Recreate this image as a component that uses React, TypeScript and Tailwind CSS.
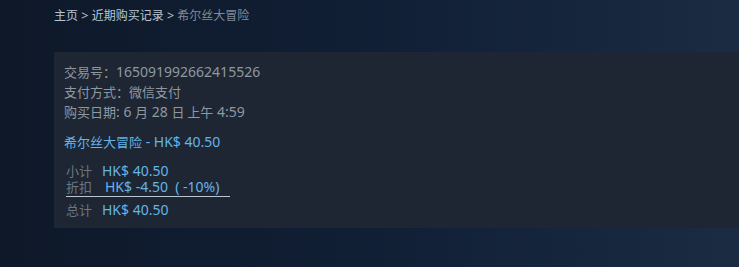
import React from "react";

const latin = { fontFamily: '"Noto Sans", "Noto Sans CJK SC", Arial, sans-serif' };

function C({ children, size = "text-[13px]" }: { children: React.ReactNode; size?: string }) {
  return <span className={size} style={{ fontFamily: '"Noto Sans CJK SC", "Noto Sans", sans-serif' }}>{children}</span>;
}

export default function App() {
  return (
    <div
      className="w-full h-[267px] overflow-hidden bg-[linear-gradient(90deg,#0e1829_0%,#112036_55%,#1a2b42_100%)]"
      style={latin}
    >
      <div className="pl-[54px] pt-[7px]">
        <div className="h-[16px] leading-[16px] text-[12.5px] text-[#b8c6d3] whitespace-nowrap">
          <C size="text-[12px]">主页</C> &gt; <C size="text-[12px]">近期购买记录</C> &gt;{" "}
          <span className="text-[#7f8c99]"><C size="text-[12px]">希尔丝大冒险</C></span>
        </div>
        <div className="mt-[29px] h-[176px] bg-[#1e2633] pl-[10px] pt-[10px]">
          <div className="text-[14px] leading-[20px] text-[#8f98a0]">
            <div><C>交易号：</C>165091992662415526</div>
            <div><C>支付方式：微信支付</C></div>
            <div><C>购买日期</C>: 6 <C>月</C> 28 <C>日 上午</C> 4:59</div>
          </div>
          <div className="mt-[10px] text-[14px] leading-[20px] text-[#64b4ea]">
            <C>希尔丝大冒险</C> - HK$ 40.50
          </div>
          <div className="mt-[11px] ml-[2px] text-[14px] leading-[16px]">
            <div className="flex items-baseline">
              <span className="w-[36px] text-[#6b7682]"><C>小计</C></span>
              <span className="text-[#64b4ea]">HK$ 40.50</span>
            </div>
            <div className="flex items-baseline w-[164px] border-b border-[#b8c6d3] pb-[1px]">
              <span className="w-[39px] text-[#6b7682]"><C>折扣</C></span>
              <span className="text-[#64b4ea] whitespace-nowrap">HK$ -4.50 &nbsp;( -10%)</span>
            </div>
            <div className="flex items-baseline mt-[5px]">
              <span className="w-[36px] text-[#6b7682]"><C>总计</C></span>
              <span className="text-[#64b4ea]">HK$ 40.50</span>
            </div>
          </div>
        </div>
      </div>
    </div>
  );
}
